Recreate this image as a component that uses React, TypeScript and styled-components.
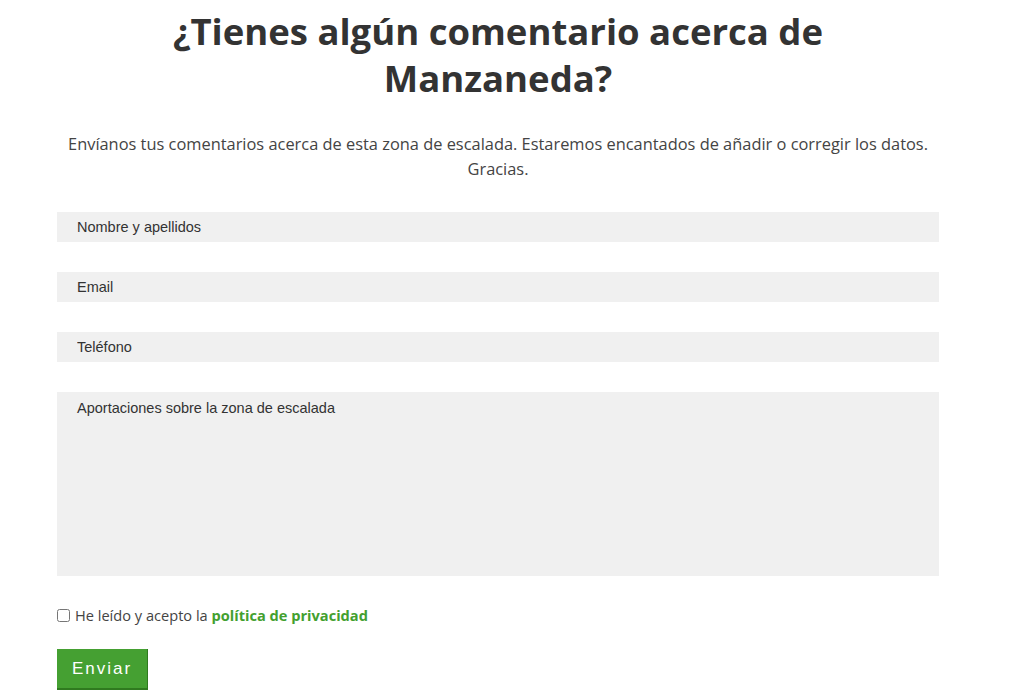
import React from 'react';
import styled, { createGlobalStyle } from 'styled-components';

const GlobalStyle = createGlobalStyle`
  body {
    margin: 0;
    background: #ffffff;
    font-family: 'Open Sans', sans-serif;
    color: #333333;
  }
`;

const Page = styled.div`
  width: 882px;
  margin-left: 57px;
  padding-top: 8px;
`;

const Title = styled.h2`
  margin: 0;
  font-family: 'Open Sans', sans-serif;
  font-weight: 700;
  font-size: 36.5px;
  line-height: 47px;
  text-align: center;
  color: #333333;
`;

const Intro = styled.p`
  margin: 29px 0 31px;
  font-size: 16.4px;
  line-height: 25px;
  text-align: center;
  color: #444444;
`;

const Form = styled.form`
  display: flex;
  flex-direction: column;
`;

const Field = styled.input`
  box-sizing: border-box;
  width: 100%;
  height: 30px;
  margin-bottom: 30px;
  padding: 0 20px;
  border: none;
  background: #f0f0f0;
  font-family: 'Liberation Sans', Arial, sans-serif;
  font-size: 14.5px;
  color: #333333;
  outline: none;
  &::placeholder {
    color: #333333;
  }
`;

const Area = styled.textarea`
  box-sizing: border-box;
  width: 100%;
  height: 184px;
  margin: 0;
  padding: 7px 20px;
  border: none;
  resize: none;
  background: #f0f0f0;
  font-family: 'Liberation Sans', Arial, sans-serif;
  font-size: 14.5px;
  line-height: 18px;
  color: #333333;
  outline: none;
  &::placeholder {
    color: #333333;
  }
`;

const Consent = styled.label`
  display: flex;
  align-items: center;
  gap: 5px;
  margin-top: 29px;
  font-size: 14.6px;
  color: #444444;
`;

const Box = styled.input`
  width: 13px;
  height: 13px;
  margin: 0;
`;

const Policy = styled.a`
  color: #43a02f;
  font-weight: 700;
  text-decoration: none;
`;

const Send = styled.button`
  align-self: flex-start;
  margin-top: 24px;
  width: 91px;
  height: 41px;
  border: none;
  border-bottom: 2px solid #2f7a1f;
  border-right: 1px solid #2f7a1f;
  background: #45a032;
  color: #ffffff;
  font-family: 'Liberation Sans', Arial, sans-serif;
  font-size: 17px;
  letter-spacing: 2px;
  cursor: pointer;
`;

export default function App() {
  return (
    <>
      <GlobalStyle />
      <Page>
        <Title>
          ¿Tienes algún comentario acerca de
          <br />
          Manzaneda?
        </Title>
        <Intro>
          Envíanos tus comentarios acerca de esta zona de escalada. Estaremos encantados de añadir o corregir los datos.
          Gracias.
        </Intro>
        <Form onSubmit={e => e.preventDefault()}>
          <Field placeholder="Nombre y apellidos" />
          <Field placeholder="Email" />
          <Field placeholder="Teléfono" />
          <Area placeholder="Aportaciones sobre la zona de escalada" />
          <Consent>
            <Box type="checkbox" />
            <span>
              He leído y acepto la <Policy href="#">política de privacidad</Policy>
            </span>
          </Consent>
          <Send type="submit">Enviar</Send>
        </Form>
      </Page>
    </>
  );
}
